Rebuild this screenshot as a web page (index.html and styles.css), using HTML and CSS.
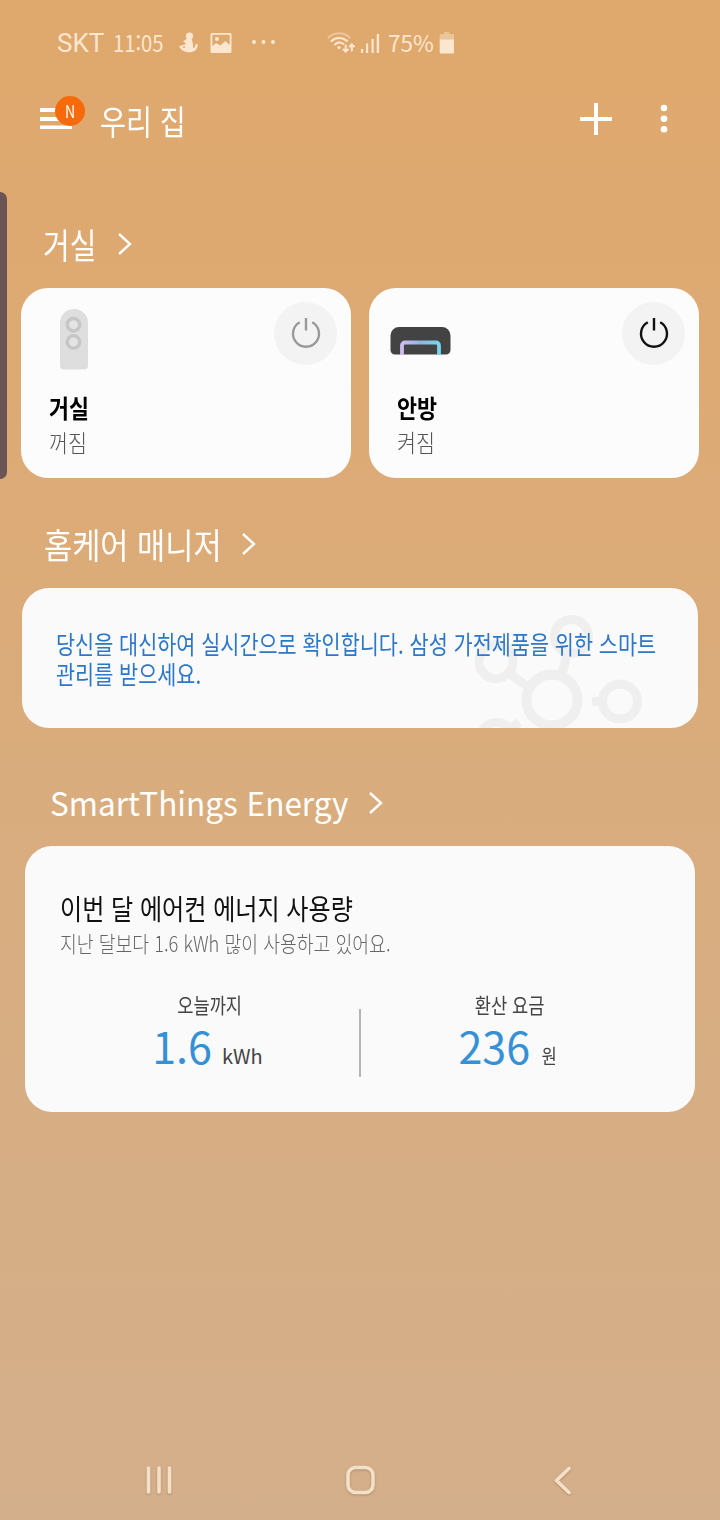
FILE: index.html
```html
<!DOCTYPE html>
<html lang="ko">
<head>
    <meta charset="UTF-8">
    <meta name="viewport" content="width=device-width, initial-scale=1.0">
    <title>SmartThings</title>
    <link rel="stylesheet" href="styles.css">
</head>
<body>
    <div class="screen">
        <div class="edge-handle"></div>

        <div class="status-bar">
            <span class="carrier">SKT</span>
            <span class="clock"><span class="narrow">11:05</span></span>
            <svg class="icon-person" width="20" height="22" viewBox="0 0 20 22">
                <circle cx="10.500" cy="4" r="3.600"/>
                <path d="M6.500 7.800L9 5.500l3.500 1.500c.8 1.800 1.500 4 1.500 6.500v2.500c1.800-.5 2.700-1.800 2.300-3.700l2.200-.3c1 4.200-2 7.800-7.500 8.300C6 20.800 2 18 0 14.800c2-1.500 4-2.300 5.500-2l1.500-1.300-3-2z"/>
                <circle class="hole" cx="5" cy="15" r="1"/>
            </svg>
            <svg class="icon-image" width="22" height="20" viewBox="0 0 22 20">
                <path fill-rule="evenodd" d="M2 0h18a1.500 1.500 0 0 1 1.500 1.500v17a1.500 1.500 0 0 1-1.500 1.500H2A1.500 1.500 0 0 1 .5 18.500v-17A1.500 1.500 0 0 1 2 0zM2.300 1.800V13l4-3 4 2.500 5-4.500 4.400 4V1.800z"/>
                <circle cx="7" cy="6" r="2"/>
            </svg>
            <svg class="icon-more" width="25" height="6" viewBox="0 0 25 6">
                <circle cx="3" cy="2" r="2"/><circle cx="12.500" cy="2" r="2"/><circle cx="22" cy="2" r="2"/>
            </svg>
            <svg class="icon-wifi" width="28" height="22" viewBox="0 0 28 22">
                <g fill="none" stroke="#fbe6d0" stroke-width="2" stroke-linecap="round">
                    <path opacity=".5" d="M1.500 5.500C7-.2 17-.2 22.500 5.500"/>
                    <path d="M4.500 9C8.500 5 15.500 5 20 9"/>
                    <path d="M8 12.500c2.500-2.500 6-2.500 8.500-.5"/>
                    <path d="M18.700 13.500v6M16.500 17.500l2.200 2.200 2.200-2.200M24.800 18.500v-6M22.600 14.500l2.200-2.200 2.200 2.200"/>
                </g>
                <circle cx="12" cy="15.500" r="1.600"/>
            </svg>
            <svg class="icon-signal" width="20" height="21" viewBox="0 0 20 21">
                <path d="M1 16h2.200v4H1zM6 10.500h2.200V20H6zM11.500 6h2.200v14h-2.200zM16.700 1h2.400v19h-2.400z"/>
            </svg>
            <span class="percent"><span class="narrow">75%</span></span>
            <svg class="icon-battery" width="16" height="22" viewBox="0 0 16 22">
                <path opacity=".45" d="M5 0h5.500v2H14a1 1 0 0 1 1 1v5H.7V3a1 1 0 0 1 1-1H5z"/>
                <path d="M.7 7.500H15V20.500a1 1 0 0 1-1 1H1.700a1 1 0 0 1-1-1z"/>
            </svg>
        </div>

        <header class="app-bar">
            <div class="menu">
                <svg width="34" height="24" viewBox="0 0 34 24">
                    <path d="M0 1h32v4H0zM0 10h32v4H0zM0 18.500h32v3.500H0z"/>
                </svg>
                <span class="badge"><span class="narrow">N</span></span>
            </div>
            <h1 class="home-name"><span class="narrow">우리 집</span></h1>
            <svg class="add" width="32" height="32" viewBox="0 0 32 32">
                <path d="M14 0h4v14h14v4H18v14h-4V18H0v-4h14z"/>
            </svg>
            <svg class="kebab" width="8" height="30" viewBox="0 0 8 30">
                <circle cx="4" cy="4" r="3.300"/><circle cx="4" cy="14.700" r="3.300"/><circle cx="4" cy="25.300" r="3.300"/>
            </svg>
        </header>

        <section class="room">
            <h2 class="section-title">
                <span class="title-text title-room"><span class="narrow">거실</span></span>
                <svg width="16" height="24" viewBox="0 0 16 24"><path d="M2 2l11 10L2 22"/></svg>
            </h2>
            <div class="devices">
                <div class="device">
                    <div class="device-top">
                        <svg class="purifier" width="28" height="61" viewBox="0 0 28 61">
                            <path fill="#dedede" d="M0 14a14 14 0 0 1 28 0v42.500a4 4 0 0 1-4 4H4a4 4 0 0 1-4-4z"/>
                            <g fill="#e4e4e4" stroke="#c6c6c6" stroke-width="3.500">
                                <circle cx="13.500" cy="15.700" r="6.200"/>
                                <circle cx="13.500" cy="33" r="6.200"/>
                            </g>
                        </svg>
                        <button class="power off">
                            <svg width="32" height="34" viewBox="0 0 32 34"><path d="M16 2v12.500M9.800 6.300a13 13 0 1 0 12.400 0"/></svg>
                        </button>
                    </div>
                    <div class="device-name"><span class="narrow">거실</span></div>
                    <div class="device-state"><span class="narrow">꺼짐</span></div>
                </div>
                <div class="device">
                    <div class="device-top">
                        <svg class="aircon" width="61" height="28" viewBox="0 0 61 28">
                            <defs>
                                <linearGradient id="glow" x1="0" x2="1" y1="0" y2="0">
                                    <stop offset="0" stop-color="#cdbcf2"/>
                                    <stop offset=".5" stop-color="#8eb5e6"/>
                                    <stop offset="1" stop-color="#79d4ea"/>
                                </linearGradient>
                            </defs>
                            <path fill="#434343" d="M9 0h43a8.500 8.500 0 0 1 8.500 8.500V23a4.500 4.500 0 0 1-4.500 4.500H5A4.500 4.500 0 0 1 .5 23V8.500A8.500 8.500 0 0 1 9 0z"/>
                            <path fill="none" stroke="url(#glow)" stroke-width="3.800" d="M12 28V18.500a3 3 0 0 1 3-3h31a3 3 0 0 1 3 3V28"/>
                        </svg>
                        <button class="power">
                            <svg width="32" height="34" viewBox="0 0 32 34"><path d="M16 2v12.500M9.800 6.300a13 13 0 1 0 12.400 0"/></svg>
                        </button>
                    </div>
                    <div class="device-name"><span class="narrow">안방</span></div>
                    <div class="device-state"><span class="narrow">켜짐</span></div>
                </div>
            </div>
        </section>

        <section class="homecare">
            <h2 class="section-title">
                <span class="title-text title-care"><span class="narrow">홈케어 매니저</span></span>
                <svg width="16" height="24" viewBox="0 0 16 24"><path d="M2 2l11 10L2 22"/></svg>
            </h2>
            <div class="care-card">
                <svg class="molecule" width="180" height="120" viewBox="470 608 180 120">
                    <g fill="none" stroke="#efefef" stroke-width="9">
                        <circle cx="552" cy="700" r="25.500" stroke-width="10"/>
                        <circle cx="571.500" cy="636.500" r="17"/>
                        <circle cx="496" cy="661.500" r="17"/>
                        <circle cx="620" cy="701.500" r="17.500"/>
                        <circle cx="497" cy="740" r="17.500"/>
                        <path d="M509 673l23 17M567 654l-6 24M592 701.500h12M511 729l8-7"/>
                    </g>
                </svg>
                <p class="care-text narrow">당신을 대신하여 실시간으로 확인합니다. 삼성 가전제품을 위한 스마트<br>관리를 받으세요.</p>
            </div>
        </section>

        <section class="energy">
            <h2 class="section-title">
                <span class="title-text title-energy"><span class="narrow">SmartThings Energy</span></span>
                <svg width="16" height="24" viewBox="0 0 16 24"><path d="M2 2l11 10L2 22"/></svg>
            </h2>
            <div class="energy-card">
                <h3 class="energy-title narrow">이번 달 에어컨 에너지 사용량</h3>
                <p class="energy-note narrow">지난 달보다 1.6 kWh 많이 사용하고 있어요.</p>
                <div class="stats">
                    <div class="stat">
                        <div class="stat-label"><span>오늘까지</span></div>
                        <div class="stat-value"><strong>1.6</strong><span class="unit">kWh</span></div>
                    </div>
                    <div class="stat">
                        <div class="stat-label"><span>환산 요금</span></div>
                        <div class="stat-value"><strong>236</strong><span class="unit won">원</span></div>
                    </div>
                </div>
            </div>
        </section>

        <nav class="nav-bar">
            <svg width="32" height="32" viewBox="0 0 32 32"><path d="M5.500 4v24M16 4v24M26.500 4v24"/></svg>
            <svg width="32" height="32" viewBox="0 0 32 32"><rect x="4" y="3.500" width="25" height="25" rx="7.500"/></svg>
            <svg width="32" height="32" viewBox="0 0 32 32"><path d="M24 4.500L11.500 16.500 24 28.500"/></svg>
        </nav>
    </div>
</body>
</html>
```

FILE: styles.css
```css
* {
    box-sizing: border-box;
}
body {
    margin: 0;
    font-family: "Noto Sans CJK KR", sans-serif;
    color: #fff;
}
h1, h2, h3, p {
    margin: 0;
    font-weight: 400;
}
.screen {
    position: relative;
    display: flex;
    flex-direction: column;
    width: 720px;
    height: 1520px;
    overflow: hidden;
    background: linear-gradient(#dfa86c, #ddaa74 25%, #d8ad80 60%, #d4af8b);
}
/* condensed lettering */
.narrow {
    display: inline-block;
    white-space: nowrap;
    transform: scaleX(0.83);
    transform-origin: 0 50%;
}
.edge-handle {
    position: absolute;
    left: 0;
    top: 192px;
    width: 7px;
    height: 287px;
    background: #6b5554;
    border-radius: 0 7px 7px 0;
}

/* status bar */
.status-bar {
    display: flex;
    align-items: center;
    height: 86px;
    padding-left: 57px;
    color: #fbe6d0;
    font-size: 23px;
}
.status-bar svg {
    flex: none;
    fill: #fbe6d0;
}
.status-bar .hole {
    fill: #dfa86c;
}
.carrier {
    width: 56px;
    font-family: Roboto, sans-serif;
    font-size: 26px;
}
.clock {
    width: 66px;
}
.status-bar .narrow {
    transform: translateY(-1px) scaleX(0.88);
}
.icon-image {
    margin-left: 11px;
}
.icon-more {
    margin-left: 19px;
}
.icon-wifi {
    margin-left: 51px;
}
.icon-signal {
    margin-left: 5px;
}
.percent {
    width: 51px;
    margin-left: 8px;
}
.percent .narrow {
    transform: translateY(-1px) scaleX(0.98);
}

/* app bar */
.app-bar {
    display: flex;
    align-items: center;
    height: 66px;
    padding: 0 52px 0 40px;
}
.app-bar svg {
    fill: #fff;
}
.menu {
    position: relative;
    height: 24px;
}
.badge {
    position: absolute;
    left: 15px;
    top: -11px;
    width: 30px;
    height: 30px;
    border-radius: 50%;
    background: #f76a0c;
    font-size: 17px;
    line-height: 30px;
    text-align: center;
}
.badge .narrow {
    transform-origin: 50% 50%;
}
.home-name {
    flex: 1;
    margin-left: 26px;
    padding-top: 3px;
    font-size: 34px;
    line-height: 40px;
}
.kebab {
    margin-left: 48px;
}

/* sections */
.section-title {
    display: flex;
    align-items: center;
    height: 48px;
    font-size: 35px;
    line-height: 46px;
}
.section-title svg {
    fill: none;
    stroke: #fff;
    stroke-width: 2.4;
}
.title-text {
    white-space: nowrap;
}
.room {
    padding: 68px 21px 0;
}
.room .section-title,
.homecare .section-title {
    padding-left: 22px;
}
.title-room {
    width: 74px;
}
.title-care {
    width: 197px;
}
.title-care .narrow {
    transform: scaleX(0.875);
}
.title-energy {
    width: 318px;
    font-size: 33px;
    line-height: 44px;
}
.title-energy .narrow {
    transform: translateY(-1px) scaleX(0.955);
}
.devices {
    display: flex;
    gap: 18px;
    margin-top: 20px;
}
.device {
    flex: 1;
    height: 190px;
    padding: 14px 14px 0 28px;
    border-radius: 27px;
    background: #fcfcfc;
}
.device-top {
    display: flex;
    justify-content: space-between;
    align-items: flex-start;
    height: 87px;
}
.purifier {
    margin: 7px 0 0 11px;
}
.aircon {
    margin: 25px 0 0 -7px;
}
.power {
    display: flex;
    align-items: center;
    justify-content: center;
    width: 63px;
    height: 63px;
    padding: 0 0 2px;
    border: none;
    border-radius: 50%;
    background: #f3f3f3;
}
.power svg {
    fill: none;
    stroke: #111;
    stroke-width: 2.4;
}
.power.off svg {
    stroke: #999;
}
.device-name {
    color: #000;
    font-size: 25px;
    font-weight: 700;
    line-height: 36px;
}
.device-name .narrow {
    transform: scaleX(0.87);
}
.device-state {
    color: #555;
    font-size: 24px;
    font-weight: 300;
    line-height: 33px;
}
.device-state .narrow {
    transform: scaleX(0.86);
}

.homecare {
    padding: 42px 22px 0;
}
.care-card {
    position: relative;
    height: 140px;
    margin-top: 20px;
    padding: 40px 34px 0;
    border-radius: 27px;
    background: #fafafa;
    overflow: hidden;
}
.molecule {
    position: absolute;
    right: 48px;
    bottom: 0;
}
.care-text {
    position: relative;
    color: #2d77c9;
    font-size: 25px;
    line-height: 30px;
}

.energy {
    padding: 51px 25px 0;
}
.energy .section-title {
    padding-left: 25px;
}
.energy-card {
    height: 266px;
    margin-top: 19px;
    padding: 43px 0 0 35px;
    border-radius: 27px;
    background: #fafafa;
}
.energy-title {
    display: block;
    color: #111;
    font-size: 28px;
    line-height: 38px;
    transform: scaleX(0.86);
}
.energy-note {
    display: block;
    color: #666;
    font-size: 22px;
    font-weight: 300;
    line-height: 31px;
}
.stats {
    display: flex;
    margin: 33px 0 0 -35px;
}
.stat {
    flex: 1;
    position: relative;
    color: #444;
    text-align: center;
}
.stat + .stat::before {
    content: "";
    position: absolute;
    left: -1px;
    top: 18px;
    width: 2px;
    height: 68px;
    background: #b4b4b4;
}
.stat-label {
    padding-left: 35px;
    font-size: 21px;
    line-height: 26px;
}
.stat + .stat .stat-label {
    padding: 0 35px 0 0;
}
.stat-label span {
    display: inline-block;
    transform: scaleX(0.84);
}
.stat-value {
    display: flex;
    align-items: baseline;
    justify-content: center;
    padding-left: 30px;
    line-height: 56px;
}
.stat + .stat .stat-value {
    padding: 0 38px 0 0;
}
.stat-value strong {
    color: #3590d6;
    font-size: 43px;
    font-weight: 400;
}
.unit {
    margin-left: 10px;
    font-size: 20px;
}
.won {
    transform: scaleX(0.83);
}

.nav-bar {
    display: flex;
    justify-content: space-between;
    margin-top: auto;
    padding: 0 143px 24px 143px;
}
.nav-bar svg {
    fill: none;
    stroke: #f4e0c9;
    stroke-width: 3.6;
    stroke-linecap: round;
    stroke-linejoin: round;
    filter: drop-shadow(0 1px 1px rgba(120, 90, 60, 0.4));
}
```
